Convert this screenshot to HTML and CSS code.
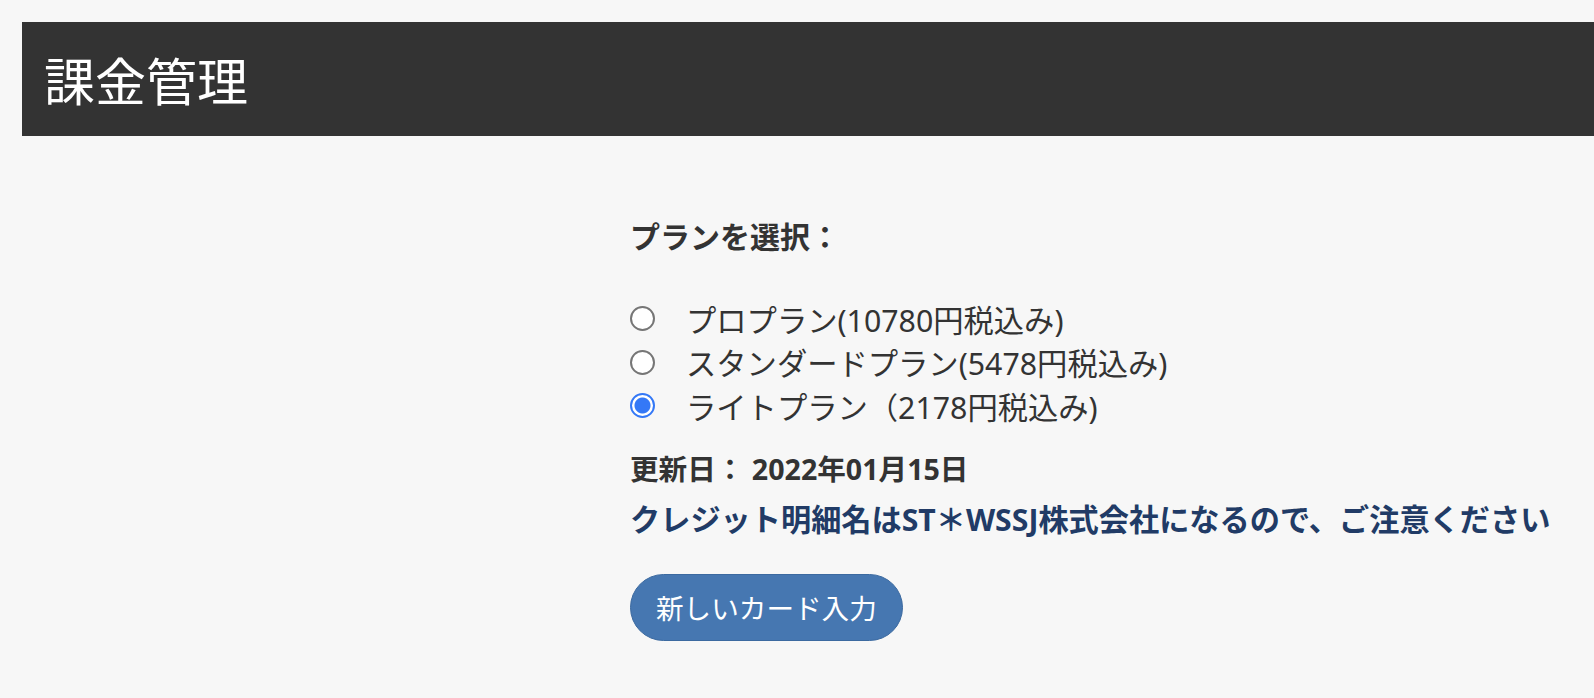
FILE: index.html
```html
<!DOCTYPE html>
<html lang="ja">
<head>
    <meta charset="UTF-8">
    <meta name="viewport" content="width=device-width, initial-scale=1.0">
    <title>課金管理</title>
    <link rel="stylesheet" href="styles.css">
</head>
<body>
    <header class="page-header">
        <h1>課金管理</h1>
    </header>

    <div class="content">
        <form id="plan-form" class="plan-form">
            <h2 class="plan-title">プランを選択：</h2>

            <div class="plan-list">
                <label class="plan-option">
                    <input type="radio" name="plan" value="pro">
                    <span>プロプラン(10780円税込み)</span>
                </label>
                <label class="plan-option">
                    <input type="radio" name="plan" value="standard">
                    <span>スタンダードプラン(5478円税込み)</span>
                </label>
                <label class="plan-option">
                    <input type="radio" name="plan" value="lite" checked>
                    <span>ライトプラン（2178円税込み)</span>
                </label>
            </div>

            <p class="update-date">更新日： 2022年01月15日</p>
            <p class="notice">クレジット明細名はST＊WSSJ株式会社になるので、ご注意ください</p>

            <div class="button-container">
                <button type="button" class="button">新しいカード入力</button>
            </div>
        </form>
    </div>
</body>
</html>
```

FILE: styles.css
```css
body {
    font-family: "Noto Sans", "Noto Sans CJK JP", sans-serif;
    background: #f7f7f7;
    color: #333;
    margin: 0;
    padding: 0;
}

.page-header {
    margin: 22px 0 0 22px;
    height: 114px;
    padding-left: 22px;
    background: #333333;
    display: flex;
    align-items: center;
}

.page-header h1 {
    margin: 0;
    color: #fff;
    font-size: 51px;
    font-weight: normal;
}

.content {
    margin-left: 630px;
    padding-top: 78px;
}

.plan-title {
    margin: 0;
    font-size: 30px;
    line-height: 45px;
    font-weight: bold;
}

.plan-list {
    margin-top: 38px;
    display: flex;
    flex-direction: column;
}

.plan-option {
    display: flex;
    align-items: center;
    gap: 31px;
    height: 43.5px;
    font-size: 30.3px;
}

.plan-option input {
    appearance: none;
    -webkit-appearance: none;
    width: 25px;
    height: 25px;
    margin: 0;
    border: 2px solid #767676;
    border-radius: 50%;
    background: #fff;
    box-sizing: border-box;
}

.plan-option input:checked {
    border-color: #3478f6;
    background: radial-gradient(circle, #3478f6 0, #3478f6 7.5px, #fff 8.5px);
}

.update-date {
    margin: 21px 0 0;
    font-size: 28.6px;
    line-height: 40px;
    font-weight: bold;
}

.notice {
    margin: 11px 0 0;
    font-size: 30.2px;
    line-height: 40px;
    font-weight: bold;
    color: #213b66;
}

.button-container {
    margin-top: 34px;
}

.button {
    height: 67px;
    padding: 0 25px;
    font-family: inherit;
    font-size: 27.6px;
    color: #fff;
    background-color: #4677b1;
    border: 1px solid #3c6aa0;
    border-radius: 34px;
    cursor: pointer;
}
```
